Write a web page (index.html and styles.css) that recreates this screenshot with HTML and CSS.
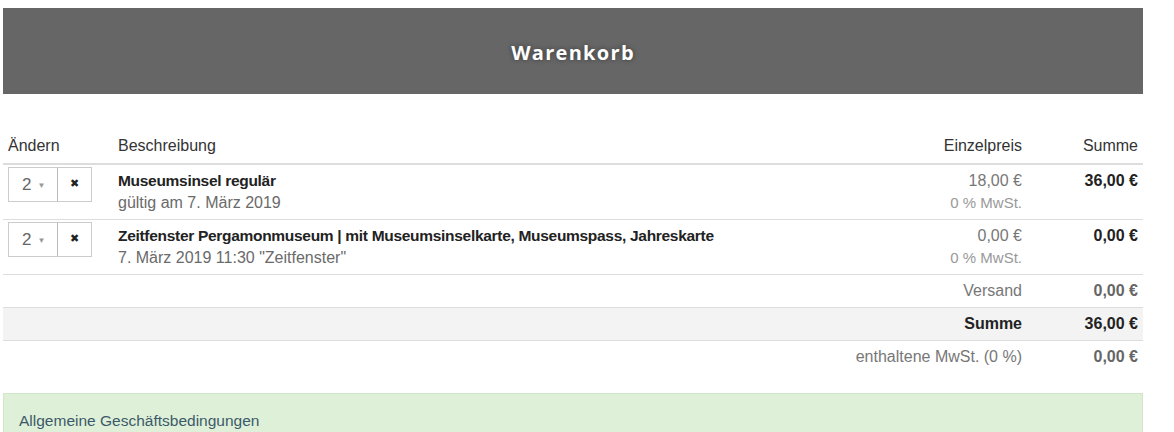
FILE: index.html
```html
<!DOCTYPE html>
<html lang="de">
<head>
<meta charset="utf-8">
<title>Warenkorb</title>
<link rel="stylesheet" href="styles.css">
</head>
<body>
<div class="page">
  <header class="banner"><h1>Warenkorb</h1></header>
  <table class="cart">
    <thead>
      <tr>
        <th class="c-edit">Ändern</th>
        <th class="c-desc">Beschreibung</th>
        <th class="c-price">Einzelpreis</th>
        <th class="c-sum">Summe</th>
      </tr>
    </thead>
    <tbody>
      <tr class="item">
        <td class="c-edit">
          <div class="qty">
            <span class="sel">2 <span class="caret">▼</span></span><span class="rm">✖</span>
          </div>
        </td>
        <td class="c-desc"><div class="name">Museumsinsel regulär</div><div class="sub">gültig am 7. März 2019</div></td>
        <td class="c-price"><div class="price">18,00 €</div><div class="vat">0 % MwSt.</div></td>
        <td class="c-sum"><b>36,00 €</b></td>
      </tr>
      <tr class="item">
        <td class="c-edit">
          <div class="qty">
            <span class="sel">2 <span class="caret">▼</span></span><span class="rm">✖</span>
          </div>
        </td>
        <td class="c-desc"><div class="name">Zeitfenster Pergamonmuseum | mit Museumsinselkarte, Museumspass, Jahreskarte</div><div class="sub">7. März 2019 11:30 "Zeitfenster"</div></td>
        <td class="c-price"><div class="price">0,00 €</div><div class="vat">0 % MwSt.</div></td>
        <td class="c-sum"><b>0,00 €</b></td>
      </tr>
      <tr class="tot">
        <td colspan="3" class="lbl">Versand</td>
        <td class="c-sum val">0,00 €</td>
      </tr>
      <tr class="tot grand">
        <td colspan="3" class="lbl">Summe</td>
        <td class="c-sum val">36,00 €</td>
      </tr>
      <tr class="tot last">
        <td colspan="3" class="lbl">enthaltene MwSt. (0 %)</td>
        <td class="c-sum val">0,00 €</td>
      </tr>
    </tbody>
  </table>
  <div class="agb">Allgemeine Geschäftsbedingungen</div>
</div>
</body>
</html>
```
FILE: styles.css
```css
* { box-sizing: border-box; }
html, body { margin: 0; padding: 0; background: #fff; }
body {
  font-family: "Liberation Sans", Arial, sans-serif;
  font-size: 16px;
  color: #333;
  overflow: hidden;
}
.page {
  width: 1140px;
  margin: 8px 0 0 3px;
}
.banner {
  background: #666;
  height: 86px;
  display: flex;
  align-items: center;
  justify-content: center;
}
.banner h1 {
  margin: 0;
  color: #fff;
  font-family: "Open Sans", sans-serif;
  font-size: 20px;
  font-weight: 700;
  letter-spacing: 1.3px;
  text-shadow: 0 0 5px rgba(0,0,0,0.45);
  position: relative;
  top: 1px;
}
.cart {
  width: 100%;
  border-collapse: collapse;
  margin-top: 34px;
}
.cart th {
  font-weight: normal;
  color: #333;
  text-align: left;
  padding: 7px 5px 6px;
  line-height: 22px;
  border-bottom: 2px solid #ddd;
}
.cart td {
  vertical-align: top;
  line-height: 22px;
  padding: 5px 5px 5px;
  border-bottom: 1px solid #ddd;
}
.c-edit { width: 110px; }
.cart .c-price { text-align: right; width: 160px; }
.cart .c-sum { text-align: right; width: 116px; }
.cart td.c-edit { padding: 2px 5px 0; }
.qty { display: flex; height: 35px; }
.sel {
  width: 50px;
  border: 1px solid #ccc;
  color: #666;
  font-size: 17px;
  display: flex;
  align-items: center;
  padding-left: 13px;
  gap: 6px;
}
.caret { font-size: 8px; color: #999; position: relative; top: 1px; }
.rm {
  width: 35px;
  border: 1px solid #ccc;
  border-left: 1px solid #bbb;
  margin-left: -1px;
  display: flex;
  justify-content: center;
  padding-top: 4px;
  font-size: 11px;
  color: #222;
}
.name {
  font-weight: 700;
  color: #222;
  font-size: 15.5px;
  letter-spacing: -0.3px;
}
.sub { color: #6a6a6a; font-size: 16px; }
.price { color: #777; }
.vat { color: #999; font-size: 15px; }
.c-sum b { color: #222; }
.tot td { padding: 5px 5px; }
.tot .lbl { text-align: right; color: #777; }
.tot .val { font-weight: 700; color: #666; }
.grand td { background: #f3f3f3; }
.grand .lbl { color: #222; font-weight: 700; }
.grand .val { color: #222; }
.tot.last td { border-bottom: 0; }
.agb {
  margin-top: 20px;
  background: #dff0d8;
  border: 1px solid #d0e6c8;
  border-bottom: 0;
  padding: 18px 15px 0;
  height: 60px;
  color: #3c5a6a;
  font-size: 15.5px;
}
```
